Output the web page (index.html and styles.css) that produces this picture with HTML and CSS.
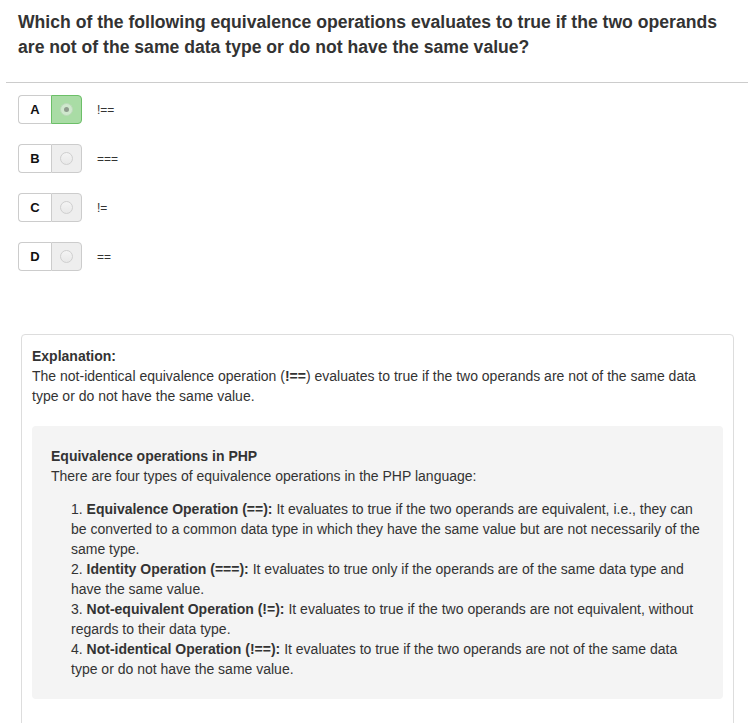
FILE: index.html
```html
<!DOCTYPE html>
<html>
<head>
<meta charset="utf-8">
<link rel="stylesheet" href="styles.css">
</head>
<body>
<h1 class="question">Which of the following equivalence operations evaluates to true if the two operands are not of the same data type or do not have the same value?</h1>
<hr class="divider">
<div class="options">
  <div class="option">
    <div class="opt-box selected"><span class="opt-letter">A</span><span class="opt-radio"><span class="radio checked"></span></span></div>
    <span class="opt-text">!==</span>
  </div>
  <div class="option">
    <div class="opt-box"><span class="opt-letter">B</span><span class="opt-radio"><span class="radio"></span></span></div>
    <span class="opt-text">===</span>
  </div>
  <div class="option">
    <div class="opt-box"><span class="opt-letter">C</span><span class="opt-radio"><span class="radio"></span></span></div>
    <span class="opt-text">!=</span>
  </div>
  <div class="option">
    <div class="opt-box"><span class="opt-letter">D</span><span class="opt-radio"><span class="radio"></span></span></div>
    <span class="opt-text">==</span>
  </div>
</div>
<div class="panel">
  <div class="expl-title">Explanation:</div>
  <p class="expl-text">The not-identical equivalence operation (<b>!==</b>) evaluates to true if the two operands are not of the same data type or do not have the same value.</p>
  <div class="well">
    <div class="well-title">Equivalence operations in PHP</div>
    <p class="well-text">There are four types of equivalence operations in the PHP language:</p>
    <div class="list">
      <p>1. <b>Equivalence Operation (==):</b> It evaluates to true if the two operands are equivalent, i.e., they can be converted to a common data type in which they have the same value but are not necessarily of the same type.</p>
      <p>2. <b>Identity Operation (===):</b> It evaluates to true only if the operands are of the same data type and have the same value.</p>
      <p>3. <b>Not-equivalent Operation (!=):</b> It evaluates to true if the two operands are not equivalent, without regards to their data type.</p>
      <p>4. <b>Not-identical Operation (!==):</b> It evaluates to true if the two operands are not of the same data type or do not have the same value.</p>
    </div>
  </div>
</div>
</body>
</html>
```
FILE: styles.css
```css
html, body {
  margin: 0;
  padding: 0;
  background: #fff;
}
body {
  font-family: "Liberation Sans", Arial, sans-serif;
  color: #333;
  font-size: 14px;
  line-height: 20px;
}
.question {
  margin: 0;
  padding: 10px 25px 0 18px;
  font-size: 17.6px;
  line-height: 25px;
  font-weight: bold;
  color: #333;
}
.divider {
  border: 0;
  border-top: 1px solid #ccc;
  margin: 22px 0 0 6px;
  height: 0;
}
.options {
  display: flex;
  flex-direction: column;
  gap: 20px;
  padding: 12px 0 0 18px;
}
.option {
  display: flex;
  align-items: center;
  height: 29px;
}
.opt-box {
  display: flex;
  width: 64px;
  height: 29px;
}
.opt-letter {
  width: 33px;
  box-sizing: border-box;
  display: flex;
  align-items: center;
  justify-content: center;
  font-weight: bold;
  font-size: 13px;
  color: #111;
  background: #fff;
  border: 1px solid #ccc;
  border-right: 0;
  border-radius: 4px 0 0 4px;
}
.opt-radio {
  flex: 1;
  box-sizing: border-box;
  display: flex;
  align-items: center;
  justify-content: center;
  background: #eee;
  border: 1px solid #ccc;
  border-radius: 0 4px 4px 0;
}
.opt-box.selected .opt-radio {
  background: #a9dca5;
  border-color: #6cbf68;
}
.radio {
  width: 11px;
  height: 11px;
  border-radius: 50%;
  border: 1px solid #cfcfcf;
  background: linear-gradient(#f4f4f4, #e8e8e8);
  position: relative;
}
.radio.checked {
  border-color: #bcd9ba;
  background: #cfe8cd;
}
.radio.checked::after {
  content: "";
  position: absolute;
  left: 3px;
  top: 3px;
  width: 5px;
  height: 5px;
  border-radius: 50%;
  background: #8e9c8d;
}
.opt-text {
  margin-left: 15px;
  font-size: 12px;
  color: #333;
}
.panel {
  margin: 63px 14px 0 21px;
  border: 1px solid #ddd;
  border-radius: 4px;
  padding: 11px 10px 30px 10px;
}
.expl-title {
  font-weight: bold;
}
.expl-text {
  margin: 0;
}
.well {
  margin-top: 20px;
  background: #f4f4f4;
  border-radius: 4px;
  padding: 20px 20px 20px 19px;
}
.well-title {
  font-weight: bold;
}
.well-text {
  margin: 0;
}
.list {
  margin-top: 13px;
  padding-left: 20px;
}
.list p {
  margin: 0;
}
```
